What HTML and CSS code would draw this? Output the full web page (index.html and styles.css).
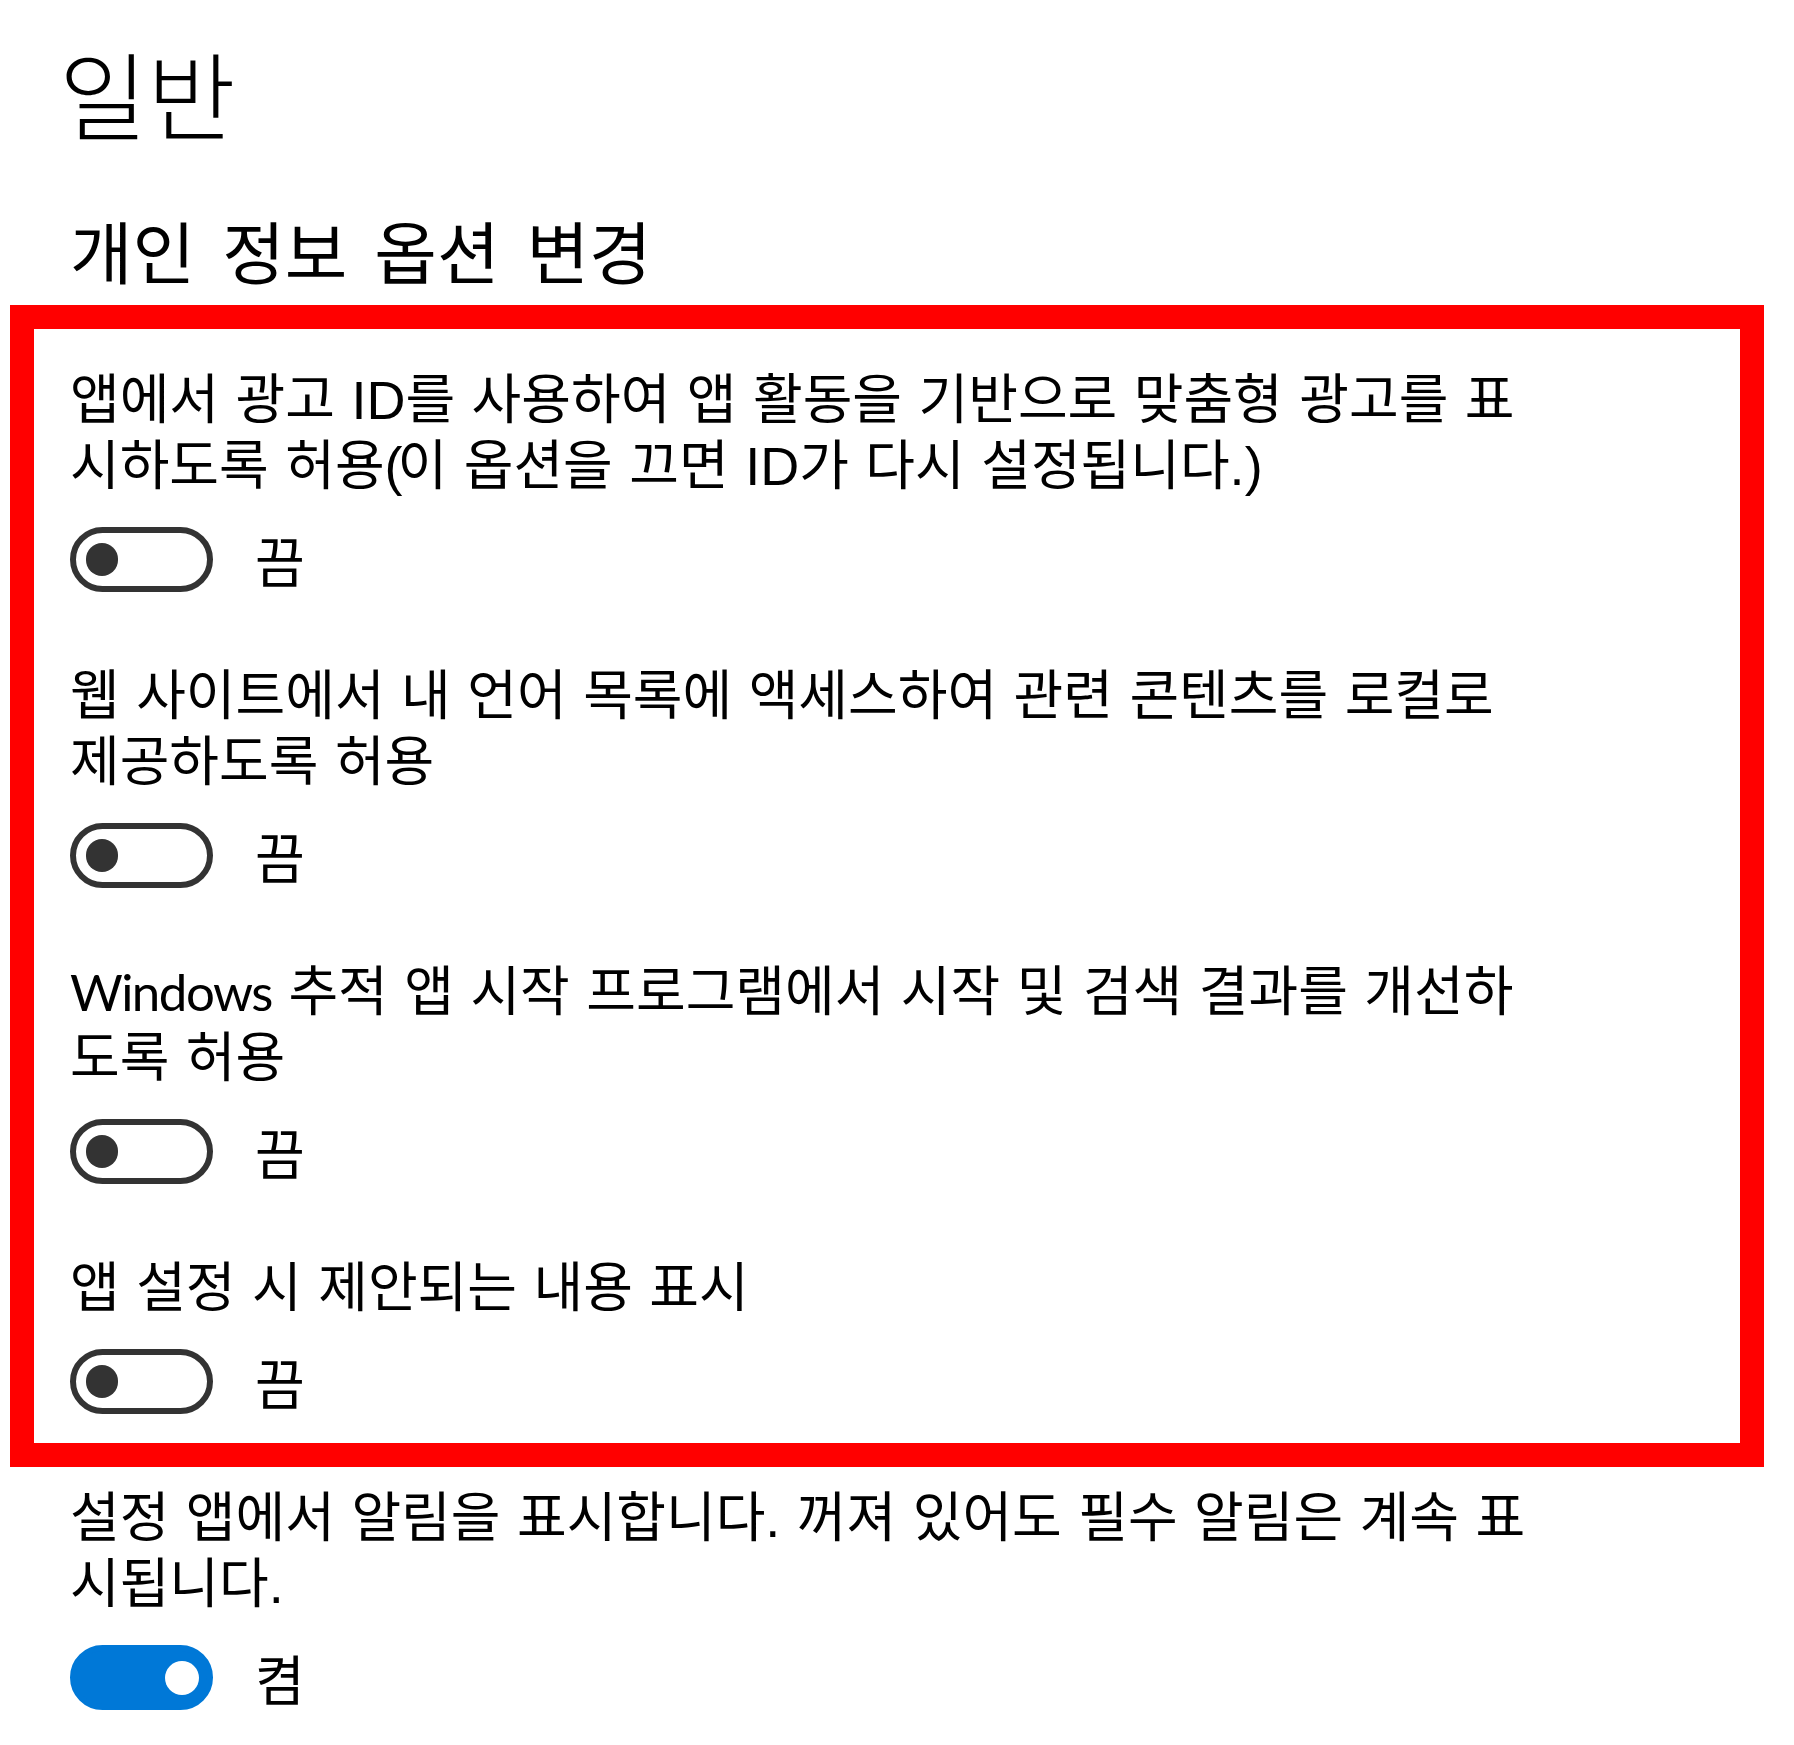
FILE: index.html
```html
<!DOCTYPE html>
<html lang="ko">
<head>
<meta charset="utf-8">
<title>일반</title>
<link rel="stylesheet" href="styles.css">
</head>
<body>
<main class="page">
  <h1 class="title">일반</h1>
  <h2 class="subtitle">개인 정보 옵션 변경</h2>
  <section class="highlight">
    <div class="setting">
      <p class="label">앱에서 광고 ID를 사용하여 앱 활동을 기반으로 맞춤형 광고를 표<br>시하도록 허용<span class="paren">(</span>이 옵션을 끄면 ID가 다시 설정됩니다.<span class="paren">)</span></p>
      <div class="switch-row"><span class="switch"></span><span class="state">끔</span></div>
    </div>
    <div class="setting">
      <p class="label">웹 사이트에서 내 언어 목록에 액세스하여 관련 콘텐츠를 로컬로<br>제공하도록 허용</p>
      <div class="switch-row"><span class="switch"></span><span class="state">끔</span></div>
    </div>
    <div class="setting">
      <p class="label"><span class="brand">Windows</span> 추적 앱 시작 프로그램에서 시작 및 검색 결과를 개선하<br>도록 허용</p>
      <div class="switch-row"><span class="switch"></span><span class="state">끔</span></div>
    </div>
    <div class="setting">
      <p class="label">앱 설정 시 제안되는 내용 표시</p>
      <div class="switch-row"><span class="switch"></span><span class="state">끔</span></div>
    </div>
  </section>
  <div class="setting outside">
    <p class="label">설정 앱에서 알림을 표시합니다. 꺼져 있어도 필수 알림은 계속 표<br>시됩니다.</p>
    <div class="switch-row"><span class="switch on"></span><span class="state">켬</span></div>
  </div>
</main>
</body>
</html>
```

FILE: styles.css
```css
html, body {
  margin: 0;
  background: #ffffff;
}

body {
  font-family: "Noto Sans CJK KR", "Noto Sans", sans-serif;
  color: #000000;
}

.page {
  padding: 0 30px 40px 10px;
}

.title {
  margin: 42px 0 0 49px;
  font-size: 96px;
  line-height: 100px;
  font-weight: 300;
  white-space: nowrap;
}

.subtitle {
  margin: 68px 0 0 60px;
  font-size: 68px;
  line-height: 80px;
  font-weight: 400;
  word-spacing: 8px;
  white-space: nowrap;
}

.highlight {
  margin-top: 15px;
  border: 24px solid #ff0000;
  padding: 33px 0 29px 36px;
  display: flex;
  flex-direction: column;
  gap: 66px;
}

.setting {
  display: flex;
  flex-direction: column;
}

.setting.outside {
  margin: 13px 0 0 60px;
}

.label {
  margin: 0;
  padding-top: 5px;
  font-family: "Liberation Sans", "Noto Sans CJK KR", sans-serif;
  font-size: 54px;
  line-height: 66px;
  word-spacing: 1.5px;
  white-space: nowrap;
}

.brand {
  font-family: Lato, "Liberation Sans", sans-serif;
  font-size: 51px;
  line-height: 1;
  letter-spacing: -1.5px;
}

.paren {
  letter-spacing: -5px;
}

.switch-row {
  margin-top: 28px;
  display: flex;
  align-items: center;
  height: 65px;
}

.switch {
  position: relative;
  box-sizing: border-box;
  width: 143px;
  height: 65px;
  border: 6.5px solid #333333;
  border-radius: 33px;
  flex: none;
}

.switch::after {
  content: "";
  position: absolute;
  top: 50%;
  left: 9.75px;
  width: 32.5px;
  height: 32.5px;
  margin-top: -16.25px;
  border-radius: 50%;
  background: #333333;
}

.switch.on {
  background: #0078d7;
  border-color: #0078d7;
}

.switch.on::after {
  left: auto;
  right: 8.5px;
  width: 34px;
  height: 34px;
  margin-top: -17px;
  background: #ffffff;
}

.state {
  margin-left: 42px;
  font-size: 54px;
  line-height: 65px;
}
```
